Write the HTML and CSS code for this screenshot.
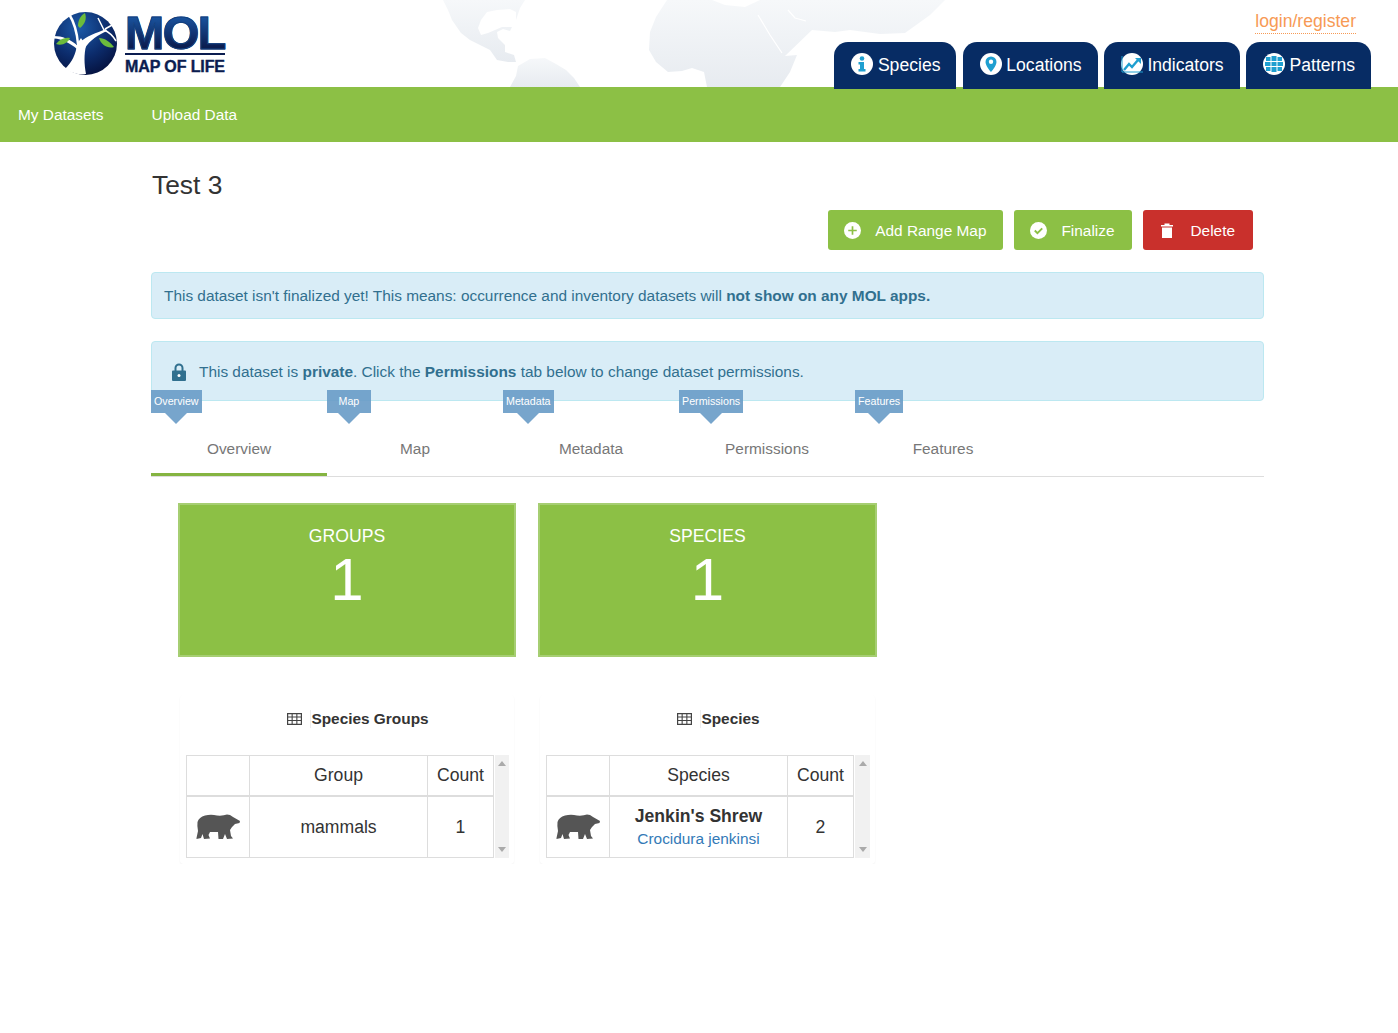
FILE: index.html
```html
<!DOCTYPE html>
<html lang="en">
<head>
    <meta charset="UTF-8">
    <title>Test 3 - Map of Life</title>
    <link rel="stylesheet" href="styles.css">
</head>
<body>
    <header class="site-header">
        <!-- faint world map behind the header -->
        <svg class="world-map" width="1398" height="87" viewBox="0 0 1398 87">
            <defs>
                <linearGradient id="land" x1="0" y1="0" x2="0" y2="1">
                    <stop offset="0" stop-color="#f6f8fa"/>
                    <stop offset="1" stop-color="#e7ebf0"/>
                </linearGradient>
            </defs>
            <path fill="url(#land)" d="M443 0 L448 10 L452 20 L461 33 L470 40 L480 45 L490 50 L497 60 L508 62 L516 62 L514 55 L505 52 L505 45 L498 38 L497 32 L503 29 L510 31 L512 27 L502 27 L495 30 L488 33 L481 35 L478 28 L481 20 L487 12 L497 10 L510 9 L516 12 L516 20 L520 8 L525 0 Z"/>
            <path fill="url(#land)" d="M510 87 L516 76 L518 66 L530 59 L545 58 L556 64 L566 70 L574 78 L580 87 Z"/>
            <path fill="url(#land)" d="M667 0 L656 17 L650 32 L649 50 L656 62 L668 72 L682 71 L692 68 L704 72 L707 87 L780 87 L790 72 L797 55 L785 56 L812 30 L835 32 L850 30 L865 32 L880 34 L905 33 L930 15 L945 0 L760 0 L745 7 L725 5 L712 0 Z"/>
            <path fill="none" stroke="#fff" stroke-width="1.200" d="M758 15 L770 35 L782 53 M788 10 L795 18 L806 21"/>
        </svg>
        <a class="logo" href="#">
            <svg class="logo-globe" width="63" height="63" viewBox="0 0 63 63">
                <defs>
                    <radialGradient id="globe" cx="0.4" cy="0.25" r="0.85">
                        <stop offset="0" stop-color="#1c5aa8"/>
                        <stop offset="0.55" stop-color="#0c2c6c"/>
                        <stop offset="1" stop-color="#040d36"/>
                    </radialGradient>
                </defs>
                <circle cx="31.500" cy="31.500" r="31.500" fill="url(#globe)"/>
                <path fill="#fff" d="M11 57 C18 50 22 42 23 32 L27 26 L32 34 C30 42 30 52 32 62 C25 63 17 61 11 57 Z"/>
                <path fill="#fff" d="M26 30 C33 24 42 21 52 17 L53 19 C44 23 36 28 31 36 Z"/>
                <path fill="#fff" d="M0 24 C8 24 16 27 24 34 L23 37 C16 31 8 27 0 26.500 Z"/>
                <path fill="none" stroke="#fff" stroke-width="2.500" d="M24 32 C23 20 20 10 15 2"/>
                <path fill="none" stroke="#fff" stroke-width="1.500" d="M50 18 C55 20 59 24 62 29 M50 18 C48 14 46 10 44 6 M51 17 L60 12"/>
                <path fill="#6cbb3c" d="M24 14 C24 8 27 3 31 1 C33 7 31 12 26 16 Z"/>
                <path fill="#6cbb3c" d="M2 32 C6 27 11 25 16 26 C14 31 8 34 2 32 Z"/>
                <path fill="#6cbb3c" d="M45 26 C51 26 56 30 60 35 C54 37 47 33 45 26 Z"/>
            </svg>
            <span class="logo-words">
                <span class="logo-mol">MOL</span>
                <span class="logo-sub">MAP OF LIFE</span>
            </span>
        </a>
        <div class="header-right">
            <a class="login" href="#">login/register</a>
            <nav class="app-tabs">
                <a class="app-tab" href="#">
                    <svg width="22" height="22" viewBox="0 0 22 22"><circle cx="11" cy="11" r="11" fill="#fff"/><circle cx="11" cy="5.500" r="2.300" fill="#1f9fd0"/><path fill="#1f9fd0" d="M7.500 9h5.500v7h1.500v2.500h-7V16H9v-4.500H7.500z"/></svg>
                    Species
                </a>
                <a class="app-tab" href="#">
                    <svg width="22" height="22" viewBox="0 0 22 22"><circle cx="11" cy="11" r="11" fill="#fff"/><path fill="#1f9fd0" d="M11 3.500a5.500 5.500 0 0 0-5.500 5.500c0 4 5.500 10 5.500 10s5.500-6 5.500-10A5.500 5.500 0 0 0 11 3.500zm0 7.500a2.200 2.200 0 1 1 0-4.400 2.200 2.200 0 0 1 0 4.400z"/></svg>
                    Locations
                </a>
                <a class="app-tab" href="#">
                    <svg width="22" height="22" viewBox="0 0 22 22"><circle cx="11" cy="11" r="11" fill="#fff"/><path fill="none" stroke="#1f9fd0" stroke-width="1" d="M1 3v16h21"/><path fill="none" stroke="#1f9fd0" stroke-width="2.400" d="M3 17l5-6 3 3 6-7"/><path fill="#1f9fd0" d="M14 5h6v6z"/></svg>
                    Indicators
                </a>
                <a class="app-tab" href="#">
                    <svg width="22" height="22" viewBox="0 0 22 22"><circle cx="11" cy="11" r="11" fill="#fff"/><path fill="#1f9fd0" d="M3 4h4.500v4H3zM8.500 3h5v5h-5zM14.500 4H19v4h-4.500zM2 9h5.500v4H2zM8.500 9h5v4h-5zM14.500 9H20v4h-5.500zM3 14h4.500v4H3zM8.500 14h5v5h-5zM14.500 14H19v4h-4.500z"/></svg>
                    Patterns
                </a>
            </nav>
        </div>
    </header>

    <nav class="green-nav">
        <a href="#">My Datasets</a>
        <a href="#">Upload Data</a>
    </nav>

    <main class="container">
        <h1 class="page-title">Test 3</h1>

        <div class="actions">
            <a class="btn btn-green" href="#">
                <svg width="17" height="17" viewBox="0 0 16 16"><circle cx="8" cy="8" r="8" fill="#fff"/><path fill="#8cc045" d="M7.200 4h1.600v3.200H12v1.600H8.800V12H7.200V8.800H4V7.200h3.200z"/></svg>
                Add Range Map
            </a>
            <a class="btn btn-green" href="#">
                <svg width="17" height="17" viewBox="0 0 16 16"><circle cx="8" cy="8" r="8" fill="#fff"/><path fill="none" stroke="#8cc045" stroke-width="1.800" d="M4.500 8l2.500 2.500 4.500-4.500"/></svg>
                Finalize
            </a>
            <a class="btn btn-red" href="#">
                <svg width="12" height="15" viewBox="0 0 12 15"><path fill="#fff" d="M0 2h3.500V.5h5V2H12v1.500H0zM1 4.500h10V15H1z"/></svg>
                Delete
            </a>
        </div>

        <div class="alert alert-top">This dataset isn't finalized yet! This means: occurrence and inventory datasets will <b>not show on any MOL apps.</b></div>

        <div class="alert alert-private">
            <svg width="16" height="18" viewBox="0 0 16 18"><path fill="none" stroke="#31708f" stroke-width="2" d="M4.500 8V5a3.500 3.500 0 0 1 7 0v3"/><path fill="#31708f" d="M2 7.500h12a1 1 0 0 1 1 1V17a1 1 0 0 1-1 1H2a1 1 0 0 1-1-1V8.500a1 1 0 0 1 1-1z"/><circle cx="8" cy="12.500" r="1.500" fill="#fff"/></svg>
            <span>This dataset is <b>private</b>. Click the <b>Permissions</b> tab below to change dataset permissions.</span>
        </div>

        <ul class="tabs">
            <li class="tab active"><span class="tip">Overview</span><a href="#">Overview</a></li>
            <li class="tab"><span class="tip tip-map">Map</span><a href="#">Map</a></li>
            <li class="tab"><span class="tip">Metadata</span><a href="#">Metadata</a></li>
            <li class="tab"><span class="tip">Permissions</span><a href="#">Permissions</a></li>
            <li class="tab"><span class="tip">Features</span><a href="#">Features</a></li>
        </ul>

        <div class="overview">
            <div class="tile">
                <div class="tile-label">GROUPS</div>
                <div class="tile-num">1</div>
            </div>
            <div class="tile">
                <div class="tile-label">SPECIES</div>
                <div class="tile-num">1</div>
            </div>

            <section class="card">
                <h4 class="card-title">
                    <svg width="15" height="12" viewBox="0 0 15 12"><path fill="#444" d="M0 0h15v12H0zm1.200 1.200v2.300h3.400V1.200zm4.500 0v2.300h3.600V1.200zm4.700 0v2.300h3.400V1.200zM1.200 4.600v2.400h3.400V4.600zm4.500 0v2.400h3.600V4.600zm4.700 0v2.400h3.400V4.600zM1.200 8.100v2.700h3.400V8.100zm4.500 0v2.700h3.600V8.100zm4.700 0v2.700h3.400V8.100z"/></svg>
                    <span>Species Groups</span>
                </h4>
                <div class="table-wrap">
                    <table class="data">
                        <thead>
                            <tr><th class="col-icon"></th><th class="col-name">Group</th><th class="col-count">Count</th></tr>
                        </thead>
                        <tbody>
                            <tr>
                                <td><svg class="bear" width="44" height="25" viewBox="0 0 44 25"><path d="M.5 24L2 17Q1 12 1.500 8Q3 3 9 1.500Q15 0 21 1.500Q27 2 31 .5L34 1L37 3L44 7L43.500 9L39 10L36 13L34 16L35 22L37 24.500L31 25L29 20L27 25L22.500 25L22 18L14 18L12.500 21L14 24.500L8 25L6.500 20L5 24L.5 25Z"/></svg></td>
                                <td>mammals</td>
                                <td>1</td>
                            </tr>
                        </tbody>
                    </table>
                    <div class="scrollbar"><i class="arrow-up"></i><i class="arrow-down"></i></div>
                </div>
            </section>

            <section class="card">
                <h4 class="card-title">
                    <svg width="15" height="12" viewBox="0 0 15 12"><path fill="#444" d="M0 0h15v12H0zm1.200 1.200v2.300h3.400V1.200zm4.500 0v2.300h3.600V1.200zm4.700 0v2.300h3.400V1.200zM1.200 4.600v2.400h3.400V4.600zm4.500 0v2.400h3.600V4.600zm4.700 0v2.400h3.400V4.600zM1.200 8.100v2.700h3.400V8.100zm4.500 0v2.700h3.600V8.100zm4.700 0v2.700h3.400V8.100z"/></svg>
                    <span>Species</span>
                </h4>
                <div class="table-wrap">
                    <table class="data">
                        <thead>
                            <tr><th class="col-icon"></th><th class="col-name">Species</th><th class="col-count">Count</th></tr>
                        </thead>
                        <tbody>
                            <tr>
                                <td><svg class="bear" width="44" height="25" viewBox="0 0 44 25"><path d="M.5 24L2 17Q1 12 1.500 8Q3 3 9 1.500Q15 0 21 1.500Q27 2 31 .5L34 1L37 3L44 7L43.500 9L39 10L36 13L34 16L35 22L37 24.500L31 25L29 20L27 25L22.500 25L22 18L14 18L12.500 21L14 24.500L8 25L6.500 20L5 24L.5 25Z"/></svg></td>
                                <td>
                                    <div class="common-name">Jenkin's Shrew</div>
                                    <a class="latin-name" href="#">Crocidura jenkinsi</a>
                                </td>
                                <td>2</td>
                            </tr>
                        </tbody>
                    </table>
                    <div class="scrollbar"><i class="arrow-up"></i><i class="arrow-down"></i></div>
                </div>
            </section>
        </div>
    </main>
</body>
</html>
```

FILE: styles.css
```css
* {
    box-sizing: border-box;
}

body {
    margin: 0;
    background-color: #fff;
    font-family: "Liberation Sans", Arial, sans-serif;
    font-size: 15.4px;
    color: #333;
}

a {
    text-decoration: none;
}

/* header */
.site-header {
    position: relative;
    display: flex;
    justify-content: space-between;
    height: 87px;
    padding-left: 54px;
    background-color: #fff;
}

.world-map {
    position: absolute;
    top: 0;
    left: 0;
}

.logo {
    position: relative;
    display: flex;
    gap: 8px;
    height: 63px;
    margin-top: 12px;
}

.logo-words {
    display: flex;
    flex-direction: column;
    width: 100px;
}

.logo-mol {
    height: 43px;
    border-bottom: 2px solid #0b1d50;
    font-size: 47px;
    font-weight: bold;
    line-height: 41px;
    letter-spacing: -1.5px;
    background: linear-gradient(#1c5cab, #0b1d50 85%);
    background-clip: text;
    -webkit-background-clip: text;
    -webkit-text-stroke: 1px #12407f;
    color: transparent;
}

.logo-sub {
    margin-top: 4px;
    font-size: 16px;
    font-weight: bold;
    line-height: 16px;
    letter-spacing: -0.1px;
    white-space: nowrap;
    -webkit-text-stroke: 0.4px #0b1d50;
    color: #0b1d50;
}

.header-right {
    position: relative;
    display: flex;
    flex-direction: column;
    align-items: flex-end;
    padding: 11px 27px 0 0;
}

.login {
    margin-right: 15px;
    padding-bottom: 1px;
    border-bottom: 1px dotted #f79a55;
    font-size: 17.6px;
    line-height: 21px;
    color: #f79a55;
}

.app-tabs {
    display: flex;
    gap: 6.3px;
    margin-top: 8px;
    position: relative;
    z-index: 1;
}

.app-tab {
    display: flex;
    gap: 4.5px;
    align-items: flex-start;
    height: 47px;
    padding: 11px 16px 0 17px;
    border-radius: 14px 14px 0 0;
    background-color: #072c64;
    font-size: 17.6px;
    line-height: 25px;
    color: #fff;
}

/* green bar */
.green-nav {
    display: flex;
    gap: 48px;
    height: 55px;
    padding-left: 18px;
    background-color: #8cc045;
    line-height: 55px;
}

.green-nav a {
    color: #fff;
}

/* content */
.container {
    margin: 0 134px 0 151px;
}

.page-title {
    margin: 0;
    padding: 28px 0 0 1px;
    font-size: 26.4px;
    font-weight: normal;
    line-height: 30px;
}

.actions {
    display: flex;
    justify-content: flex-end;
    gap: 11px;
    margin: 10px 11px 0 0;
}

.btn {
    display: flex;
    align-items: center;
    gap: 14px;
    height: 40px;
    padding: 2px 17px 0 16px;
    border-radius: 3px;
    color: #fff;
}

.btn svg {
    margin-top: -2px;
}

.btn-green {
    background-color: #8cc045;
}

.btn-red {
    gap: 18px;
    padding: 2px 18px 0;
    background-color: #c9302c;
}

.alert {
    border: 1px solid #bce8f1;
    border-radius: 4px;
    background-color: #d9edf7;
    color: #31708f;
}

.alert-top {
    margin-top: 22px;
    padding: 14px 12px;
    line-height: 17px;
}

.alert-private {
    display: flex;
    align-items: center;
    gap: 12px;
    height: 60px;
    margin-top: 22px;
    padding: 1px 0 0 19px;
}

/* tabs */
.tabs {
    display: flex;
    margin: 19px 0 0;
    padding: 0;
    border-bottom: 1px solid #ddd;
    list-style: none;
}

.tab {
    position: relative;
    width: 176px;
    height: 56px;
    text-align: center;
}

.tab a {
    display: block;
    height: 56px;
    line-height: 58px;
    color: #777;
}

.tab.active a {
    border-bottom: 3px solid #85b441;
}

.tip {
    position: absolute;
    top: -30px;
    left: 0;
    padding: 0 3px;
    background-color: rgba(104, 155, 198, 0.9);
    font-size: 10.7px;
    line-height: 23px;
    white-space: nowrap;
    color: #fff;
}

.tip-map {
    padding: 0 11.5px;
}

.tip::after {
    content: "";
    position: absolute;
    top: 23px;
    left: 50%;
    margin-left: -11px;
    border-top: 11px solid rgba(104, 155, 198, 0.9);
    border-left: 11px solid transparent;
    border-right: 11px solid transparent;
}

/* overview tiles + tables */
.overview {
    display: grid;
    grid-template-columns: 338px 339px;
    column-gap: 22px;
    row-gap: 38px;
    margin: 26px 0 0 27px;
}

.tile {
    height: 154px;
    padding-top: 21px;
    border: 2px solid #a6ce72;
    background-color: #8cc045;
    text-align: center;
    color: #fff;
}

.tile-label {
    font-size: 17.6px;
    line-height: 21px;
}

.tile-num {
    font-size: 60px;
    line-height: 66px;
}

.card {
    height: 169px;
    margin: 0 2px;
    padding: 0 5px 0 6px;
    border-radius: 4px;
    box-shadow: 0 1px 2px rgba(0, 0, 0, 0.05);
}

.card-title {
    display: flex;
    justify-content: center;
    align-items: center;
    gap: 8px;
    height: 60px;
    margin: 0;
    padding: 0 0 12px 21px;
    font-size: 15.4px;
    font-weight: bold;
}

.card-title span {
    border-left: 1px solid #eee;
}

.table-wrap {
    display: flex;
    gap: 1px;
}

.data {
    flex: none;
    width: 308px;
    height: 103px;
    border-collapse: collapse;
    table-layout: fixed;
    font-size: 17.6px;
    text-align: center;
}

.data th,
.data td {
    padding: 0;
    border: 1px solid #ddd;
}

.data td {
    padding-top: 2px;
}

.data th {
    height: 40px;
    border-bottom-width: 2px;
    font-weight: normal;
}

.col-icon {
    width: 63px;
}

.col-count {
    width: 66px;
}

.bear {
    display: block;
    margin: -2px auto 0;
    fill: #555;
}

.common-name {
    margin-top: -2px;
    font-weight: bold;
    line-height: 24px;
}

.latin-name {
    font-size: 15.4px;
    line-height: 20px;
    color: #337ab7;
}

.scrollbar {
    display: flex;
    flex: 1;
    flex-direction: column;
    justify-content: space-between;
    align-items: center;
    padding: 6px 0;
    background-color: #f1f1f1;
}

.arrow-up {
    border-bottom: 5px solid #aaa;
    border-left: 4px solid transparent;
    border-right: 4px solid transparent;
}

.arrow-down {
    border-top: 5px solid #aaa;
    border-left: 4px solid transparent;
    border-right: 4px solid transparent;
}
```
